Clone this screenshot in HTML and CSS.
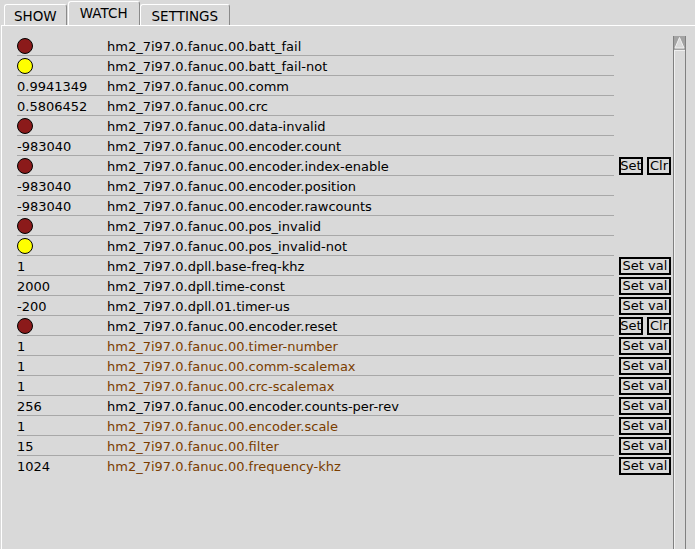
FILE: index.html
```html
<!DOCTYPE html>
<html>
<head>
  <title>Watch</title>
  <link rel="stylesheet" href="styles.css">
</head>
<body>
  <div class="tabs">
    <div class="tab">SHOW</div>
    <div class="tab active">WATCH</div>
    <div class="tab">SETTINGS</div>
  </div>
  <div class="pane">
    <div class="list">
      <div class="row"><div class="val"><span class="led red"></span></div><div class="name">hm2_7i97.0.fanuc.00.batt_fail</div></div>
      <div class="row"><div class="val"><span class="led yellow"></span></div><div class="name">hm2_7i97.0.fanuc.00.batt_fail-not</div></div>
      <div class="row"><div class="val">0.9941349</div><div class="name">hm2_7i97.0.fanuc.00.comm</div></div>
      <div class="row"><div class="val">0.5806452</div><div class="name">hm2_7i97.0.fanuc.00.crc</div></div>
      <div class="row"><div class="val"><span class="led red"></span></div><div class="name">hm2_7i97.0.fanuc.00.data-invalid</div></div>
      <div class="row"><div class="val">-983040</div><div class="name">hm2_7i97.0.fanuc.00.encoder.count</div></div>
      <div class="row"><div class="val"><span class="led red"></span></div><div class="name">hm2_7i97.0.fanuc.00.encoder.index-enable</div>
        <div class="btns"><button class="btn">Set</button><button class="btn">Clr</button></div></div>
      <div class="row"><div class="val">-983040</div><div class="name">hm2_7i97.0.fanuc.00.encoder.position</div></div>
      <div class="row"><div class="val">-983040</div><div class="name">hm2_7i97.0.fanuc.00.encoder.rawcounts</div></div>
      <div class="row"><div class="val"><span class="led red"></span></div><div class="name">hm2_7i97.0.fanuc.00.pos_invalid</div></div>
      <div class="row"><div class="val"><span class="led yellow"></span></div><div class="name">hm2_7i97.0.fanuc.00.pos_invalid-not</div></div>
      <div class="row"><div class="val">1</div><div class="name">hm2_7i97.0.dpll.base-freq-khz</div>
        <div class="btns"><button class="btn wide">Set val</button></div></div>
      <div class="row"><div class="val">2000</div><div class="name">hm2_7i97.0.dpll.time-const</div>
        <div class="btns"><button class="btn wide">Set val</button></div></div>
      <div class="row"><div class="val">-200</div><div class="name">hm2_7i97.0.dpll.01.timer-us</div>
        <div class="btns"><button class="btn wide">Set val</button></div></div>
      <div class="row"><div class="val"><span class="led red"></span></div><div class="name">hm2_7i97.0.fanuc.00.encoder.reset</div>
        <div class="btns"><button class="btn">Set</button><button class="btn">Clr</button></div></div>
      <div class="row"><div class="val">1</div><div class="name param">hm2_7i97.0.fanuc.00.timer-number</div>
        <div class="btns"><button class="btn wide">Set val</button></div></div>
      <div class="row"><div class="val">1</div><div class="name param">hm2_7i97.0.fanuc.00.comm-scalemax</div>
        <div class="btns"><button class="btn wide">Set val</button></div></div>
      <div class="row"><div class="val">1</div><div class="name param">hm2_7i97.0.fanuc.00.crc-scalemax</div>
        <div class="btns"><button class="btn wide">Set val</button></div></div>
      <div class="row"><div class="val">256</div><div class="name">hm2_7i97.0.fanuc.00.encoder.counts-per-rev</div>
        <div class="btns"><button class="btn wide">Set val</button></div></div>
      <div class="row"><div class="val">1</div><div class="name param">hm2_7i97.0.fanuc.00.encoder.scale</div>
        <div class="btns"><button class="btn wide">Set val</button></div></div>
      <div class="row"><div class="val">15</div><div class="name param">hm2_7i97.0.fanuc.00.filter</div>
        <div class="btns"><button class="btn wide">Set val</button></div></div>
      <div class="row last"><div class="val">1024</div><div class="name param">hm2_7i97.0.fanuc.00.frequency-khz</div>
        <div class="btns"><button class="btn wide">Set val</button></div></div>
    </div>
    <div class="scrollbar">
      <div class="arrow">
        <svg width="11" height="13" viewBox="0 0 11 13"><polygon points="5.5,1.5 10,12 1,12" fill="#d9d9d9" stroke="#f0f0f0" stroke-width="1"/></svg>
      </div>
      <div class="slider"></div>
    </div>
  </div>
</body>
</html>
```

FILE: styles.css
```css
body {
  margin: 0;
  padding: 0;
  background: #d9d9d9;
  font-family: "DejaVu Sans", sans-serif;
  font-size: 13px;
  color: #000;
  height: 549px;
  overflow: hidden;
}

.tabs {
  display: flex;
  align-items: flex-end;
  height: 25px;
  padding-left: 4px;
}

.tab {
  height: 20px;
  line-height: 23px;
  font-size: 13.5px;
  padding: 0 9px;
  border: 1px solid #fff;
  border-right-color: #8a8a8a;
  border-bottom: none;
  border-radius: 3px 3px 0 0;
}

.tab:last-child {
  padding: 0 11px;
}

.tab.active {
  height: 23px;
  line-height: 22px;
  padding: 0 11px;
  margin-left: 1px;
}

.pane {
  display: flex;
  border-top: 1px solid #fff;
  border-left: 1px solid #fff;
  margin-left: 1px;
  height: 523px;
}

.list {
  width: 656px;
  padding: 10px 0 0 15px;
}

.row {
  display: flex;
  align-items: center;
  height: 20px;
  position: relative;
}

.row::after {
  content: "";
  position: absolute;
  left: 0;
  bottom: 0;
  width: 597px;
  height: 1px;
  background: #a8a8a8;
}

.row.last::after {
  display: none;
}

.val {
  width: 90px;
  display: flex;
  align-items: center;
}

.name {
  width: 512px;
  white-space: nowrap;
}

.name.param {
  color: #7a3d00;
}

.led {
  display: block;
  width: 16px;
  height: 16px;
  border: 1px solid #000;
  border-radius: 50%;
  box-sizing: border-box;
  margin-top: -1px;
}

.led.red {
  background: #8b1a1a;
}

.led.yellow {
  background: #ffff00;
}

.btns {
  display: flex;
  gap: 4px;
}

.btn {
  font-family: "DejaVu Sans", sans-serif;
  font-size: 13px;
  height: 18px;
  width: 24px;
  padding: 0;
  margin: 0;
  background: #d9d9d9;
  border: 1px solid #000;
  outline: 1px solid #000;
  outline-offset: -2px;
  line-height: 14px;
  color: #000;
}

.btn.wide {
  width: 52px;
}

.scrollbar {
  width: 13px;
  margin-top: 10px;
  border-left: 1px solid #808080;
  border-right: 1px solid #808080;
  height: 513px;
  box-sizing: border-box;
  display: flex;
  flex-direction: column;
}

.arrow {
  height: 14px;
  background: #a3a3a3;
  display: flex;
  justify-content: center;
}

.slider {
  flex: 1;
  border-left: 1px solid #f0f0f0;
  border-top: 1px solid #f0f0f0;
}
```
